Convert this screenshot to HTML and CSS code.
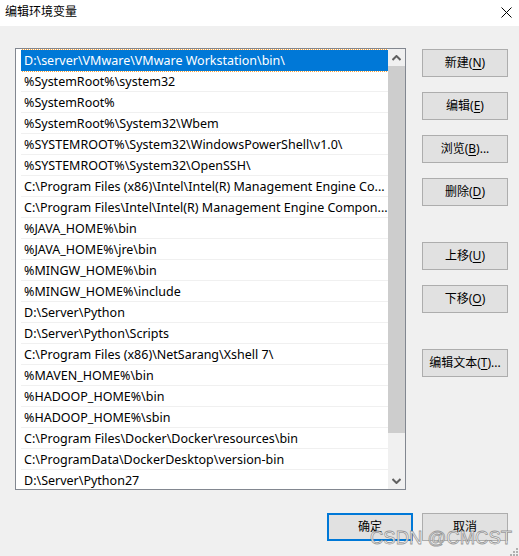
FILE: index.html
```html
<!DOCTYPE html>
<html lang="zh-CN">
<head>
<meta charset="utf-8">
<title>编辑环境变量</title>
<link rel="stylesheet" href="styles.css">
</head>
<body>
<div class="dialog">
  <div class="titlebar">
    <span class="title">编辑环境变量</span>
    <svg class="close" width="11" height="11" viewBox="0 0 11 11"><path d="M0.5 0.5 L10.5 10.5 M10.5 0.5 L0.5 10.5" stroke="#000" stroke-width="1" fill="none"/></svg>
  </div>
  <div class="body">
    <div class="main">
      <div class="listbox">
        <div class="rows">
          <div class="row selected">D:\server\VMware\VMware Workstation\bin\</div>
          <div class="row">%SystemRoot%\system32</div>
          <div class="row">%SystemRoot%</div>
          <div class="row">%SystemRoot%\System32\Wbem</div>
          <div class="row">%SYSTEMROOT%\System32\WindowsPowerShell\v1.0\</div>
          <div class="row">%SYSTEMROOT%\System32\OpenSSH\</div>
          <div class="row">C:\Program Files (x86)\Intel\Intel(R) Management Engine Co...</div>
          <div class="row">C:\Program Files\Intel\Intel(R) Management Engine Compon...</div>
          <div class="row">%JAVA_HOME%\bin</div>
          <div class="row">%JAVA_HOME%\jre\bin</div>
          <div class="row">%MINGW_HOME%\bin</div>
          <div class="row">%MINGW_HOME%\include</div>
          <div class="row">D:\Server\Python</div>
          <div class="row">D:\Server\Python\Scripts</div>
          <div class="row">C:\Program Files (x86)\NetSarang\Xshell 7\</div>
          <div class="row">%MAVEN_HOME%\bin</div>
          <div class="row">%HADOOP_HOME%\bin</div>
          <div class="row">%HADOOP_HOME%\sbin</div>
          <div class="row">C:\Program Files\Docker\Docker\resources\bin</div>
          <div class="row">C:\ProgramData\DockerDesktop\version-bin</div>
          <div class="row">D:\Server\Python27</div>
        </div>
        <div class="scrollbar">
          <div class="arrow">
            <svg width="9" height="6" viewBox="0 0 9 6"><path d="M0.5 5 L4.5 1 L8.5 5" stroke="#606060" stroke-width="2" fill="none"/></svg>
          </div>
          <div class="thumb"></div>
          <div class="track"></div>
          <div class="arrow">
            <svg width="9" height="6" viewBox="0 0 9 6"><path d="M0.5 1 L4.5 5 L8.5 1" stroke="#606060" stroke-width="2" fill="none"/></svg>
          </div>
        </div>
      </div>
      <div class="side">
        <button class="btn">新建(<u>N</u>)</button>
        <button class="btn">编辑(<u>E</u>)</button>
        <button class="btn">浏览(<u>B</u>)...</button>
        <button class="btn">删除(<u>D</u>)</button>
        <button class="btn group">上移(<u>U</u>)</button>
        <button class="btn">下移(<u>O</u>)</button>
        <button class="btn group">编辑文本(<u>T</u>)...</button>
      </div>
    </div>
    <div class="footer">
      <button class="btn default">确定</button>
      <button class="btn">取消</button>
    </div>
  </div>
  <div class="watermark">CSDN @CMCST</div>
  <svg class="grip" width="9" height="9" viewBox="0 0 9 9">
    <rect x="7" y="1" width="2" height="2" fill="#b0b0b0"/>
    <rect x="4" y="4" width="2" height="2" fill="#b0b0b0"/>
    <rect x="7" y="4" width="2" height="2" fill="#b0b0b0"/>
    <rect x="1" y="7" width="2" height="2" fill="#b0b0b0"/>
    <rect x="4" y="7" width="2" height="2" fill="#b0b0b0"/>
    <rect x="7" y="7" width="2" height="2" fill="#b0b0b0"/>
  </svg>
</div>
</body>
</html>
```
FILE: styles.css
```css
* { box-sizing: border-box; }
html, body {
  margin: 0;
  padding: 0;
  background: #f0f0f0;
}
body {
  font-family: "Noto Sans", "Noto Sans CJK SC", sans-serif;
  font-size: 12px;
  color: #000;
}
.dialog {
  position: relative;
  width: 519px;
  height: 556px;
  overflow: hidden;
  background: #f0f0f0;
}
.titlebar {
  height: 26px;
  background: #fff;
  display: flex;
  align-items: center;
  justify-content: space-between;
  padding: 0 7px 2px 5px;
}
.title {
  font-size: 12px;
  line-height: 14px;
}
.close {
  display: block;
  margin-top: 1px;
}
.body {
  padding: 22px 11px 0 15px;
}
.main {
  display: flex;
  gap: 16px;
}
.listbox {
  width: 392px;
  height: 442px;
  border: 1px solid #828790;
  background: #fff;
  display: flex;
  padding-left: 5px;
}
.rows {
  flex: 1;
  overflow: hidden;
  padding-top: 1px;
}
.row {
  height: 21px;
  line-height: 18px;
  padding: 2px 0 0 3px;
  font-size: 12.5px;
  border-bottom: 1px solid #f0f0f0;
  white-space: nowrap;
  overflow: hidden;
}
.row.selected {
  background: #0078d7;
  color: #fff;
  border-bottom-color: #0078d7;
  outline: 1px dotted #f7a23b;
  outline-offset: 0;
}
.scrollbar {
  width: 17px;
  background: #f0f0f0;
  display: flex;
  flex-direction: column;
}
.arrow {
  height: 17px;
  display: flex;
  align-items: center;
  justify-content: center;
}
.arrow svg { display: block; }
.thumb {
  height: 367px;
  background: #cdcdcd;
}
.track { flex: 1; }
.side {
  display: flex;
  flex-direction: column;
  gap: 15px;
  padding-top: 1px;
}
.btn {
  width: 86px;
  height: 28px;
  background: #e1e1e1;
  border: 1px solid #adadad;
  font-family: "Noto Sans", "Noto Sans CJK SC", sans-serif;
  font-size: 12px;
  color: #000;
  padding: 0;
  margin: 0;
  line-height: 14px;
}
.btn u { text-underline-offset: 2px; }
.side .group { margin-top: 21px; }
.footer {
  display: flex;
  justify-content: flex-end;
  gap: 9px;
  margin-top: 23px;
  padding-right: 0;
}
.btn.default {
  border: 2px solid #0078d7;
}
.watermark {
  position: absolute;
  left: 370px;
  top: 527px;
  font-family: "Liberation Sans", Arial, sans-serif;
  font-size: 18.5px;
  line-height: 22px;
  color: rgba(255, 255, 255, 0.9);
  -webkit-text-stroke: 0.8px rgba(110, 110, 110, 0.7);
}
.grip {
  position: absolute;
  right: 1px;
  bottom: 0;
}
```
